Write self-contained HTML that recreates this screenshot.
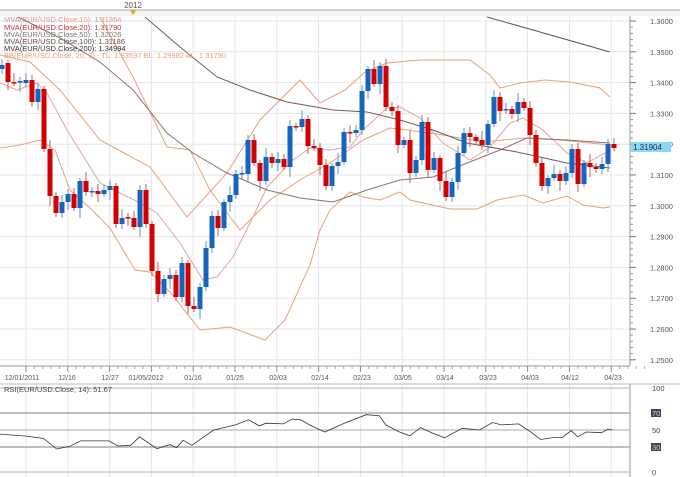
<!DOCTYPE html>
<html><head><meta charset="utf-8"><style>
body{margin:0;width:680px;height:477px;overflow:hidden;background:#fff;font-family:"Liberation Sans",sans-serif}
svg{display:block}
</style></head><body>
<svg id="c" width="680" height="477" xmlns="http://www.w3.org/2000/svg" font-family="Liberation Sans, sans-serif">
<rect width="680" height="477" fill="#fff"/>
<text x="133" y="8" font-size="8" fill="#555" text-anchor="middle">2012</text>
<rect x="0" y="10" width="680" height="6" fill="#f2f2f2"/>
<line x1="0" y1="10" x2="680" y2="10" stroke="#aaa"/>
<polygon points="130,10 136,10 133,15" fill="#f0a030"/>
<g id="grid" stroke="#e6e6ea" stroke-width="1"></g>
<line x1="630" y1="16" x2="630" y2="366" stroke="#999"/>
<line x1="0" y1="366" x2="630" y2="366" stroke="#999"/>
<g id="axis" font-size="7.5" fill="#555"></g>
<g id="lines" fill="none" stroke-width="1"></g>
<g id="candles"></g>
<g font-size="7.5">
<text x="4" y="22" fill="#e49090">MVA(EUR/USD.Close,10): 1.31364</text>
<text x="4" y="30" fill="#c83030">MVA(EUR/USD.Close,20): 1.31790</text>
<text x="4" y="37" fill="#777">MVA(EUR/USD.Close,50): 1.32026</text>
<text x="4" y="44" fill="#6a4a40">MVA(EUR/USD.Close,100): 1.31186</text>
<text x="4" y="51" fill="#333">MVA(EUR/USD.Close,200): 1.34994</text>
<text x="4" y="58" fill="#e8a070">BB(EUR/USD.Close, 20, 2) -  TL: 1.33597  BL: 1.29982  AL: 1.31790</text>
</g>
<rect x="631" y="142" width="40" height="10" fill="#8ed6f2"/>
<text x="633" y="150" font-size="8" fill="#135">1.31904</text>
<line x1="0" y1="384" x2="680" y2="384" stroke="#bbb"/>
<line x1="630" y1="384" x2="630" y2="477" stroke="#999"/>
<line x1="0" y1="388" x2="630" y2="388" stroke="#ccc" stroke-width="1.5"/>
<text x="4" y="392" font-size="7.5" fill="#444">RSI(EUR/USD.Close, 14): 51.67</text>
<line x1="0" y1="413" x2="630" y2="413" stroke="#aaa" stroke-width="1.5"/>
<line x1="0" y1="430" x2="630" y2="430" stroke="#aaa"/>
<line x1="0" y1="447" x2="630" y2="447" stroke="#aaa" stroke-width="1.5"/>
<line x1="0" y1="472" x2="630" y2="472" stroke="#ccc" stroke-width="1.5"/>
<text x="652" y="391" font-size="7.5" fill="#444">100</text>
<rect x="651" y="409" width="10" height="8" fill="#445"/><text x="652" y="416" font-size="7.5" fill="#ccd">70</text>
<text x="652" y="433" font-size="7.5" fill="#444">50</text>
<rect x="651" y="443" width="10" height="8" fill="#445"/><text x="652" y="450" font-size="7.5" fill="#ccd">30</text>
<text x="652" y="475" font-size="7.5" fill="#444">0</text>
<polyline id="rsi" fill="none" stroke="#333" stroke-width="0.8"/>
</svg>
<script>
var NS="http://www.w3.org/2000/svg";
function el(t,a,p){var e=document.createElementNS(NS,t);for(var k in a)e.setAttribute(k,a[k]);if(p)p.appendChild(e);return e;}
var g=document.getElementById('grid'),ax=document.getElementById('axis');
for(var i=0;i<12;i++){var y=21+i*30.8;el('line',{x1:0,y1:y,x2:630,y2:y},g);
var t=el('text',{x:650,y:y+3},ax);t.textContent=(1.36-i*0.01).toFixed(4);el('line',{x1:630,y1:y,x2:636,y2:y,stroke:'#777'},ax);
for(var j=1;j<5&&i<11;j++)el('line',{x1:630,y1:y+j*6.16,x2:633,y2:y+j*6.16,stroke:'#999'},ax);}
for(var x=26;x<630;x+=41.8){el('line',{x1:x,y1:16,x2:x,y2:366},g);el('line',{x1:x,y1:384,x2:x,y2:477},g);
el('line',{x1:x,y1:366,x2:x,y2:372,stroke:'#888'},ax);for(var j=1;j<5;j++)el('line',{x1:x+j*8.36,y1:366,x2:x+j*8.36,y2:369,stroke:'#aaa'},ax);}
var d=[["12/01/2011",22],["12/16",67],["12/27",110],["01/05/2012",146],["01/16",193],["01/25",235],["02/03",278],["02/14",320],["02/23",362],["03/05",403],["03/14",445],["03/23",488],["04/03",530],["04/12",570],["04/23",613]];
d.forEach(function(a){var t=el('text',{x:a[1],y:380,'text-anchor':'middle','font-size':'7'},ax);t.textContent=a[0];});
var C=[[65,69,'b'],[63,82,'r'],[82,83,'r'],[81,82,'b'],[80,83,'b'],[80,102,'r'],[89,102,'b'],[89,149,'r'],[149,196,'r'],[196,213,'r'],[202,213,'b'],[194,202,'b'],[194,208,'r'],[181,208,'b'],[181,192,'r'],[191,192,'b'],[191,194,'r'],[190,194,'b'],[186,190,'b'],[186,224,'r'],[218,224,'b'],[217,218,'r'],[218,227,'r'],[190,227,'b'],[190,224,'r'],[224,271,'r'],[271,294,'r'],[279,294,'b'],[275,279,'b'],[275,297,'r'],[263,297,'b'],[263,306,'r'],[306,309,'r'],[287,309,'b'],[248,287,'b'],[216,248,'b'],[216,228,'r'],[202,228,'b'],[195,202,'b'],[174,195,'b'],[173,174,'b'],[140,174,'b'],[140,163,'r'],[163,181,'r'],[157,181,'b'],[157,163,'r'],[159,163,'b'],[159,167,'r'],[126,167,'b'],[126,127,'r'],[119,127,'b'],[119,146,'r'],[146,148,'r'],[148,165,'r'],[165,186,'r'],[166,186,'b'],[162,166,'b'],[132,162,'b'],[132,133,'r'],[130,133,'b'],[91,130,'b'],[69,91,'b'],[69,84,'r'],[66,84,'b'],[66,107,'r'],[107,111,'r'],[111,145,'r'],[140,145,'b'],[140,173,'r'],[160,173,'b'],[122,160,'b'],[122,170,'r'],[158,170,'b'],[158,181,'r'],[181,197,'r'],[182,197,'b'],[153,182,'b'],[133,153,'b'],[133,137,'r'],[137,141,'r'],[140,145,'r'],[124,145,'b'],[97,124,'b'],[97,111,'r'],[109,110,'b'],[109,114,'r'],[102,114,'b'],[102,108,'r'],[108,135,'r'],[135,163,'r'],[163,186,'r'],[178,186,'b'],[174,178,'b'],[174,181,'r'],[173,181,'b'],[149,173,'b'],[149,184,'r'],[163,184,'b'],[163,167,'r'],[167,169,'r'],[164,169,'b'],[144,164,'b'],[144,148,'r']];
var cg=document.getElementById('candles');
C.forEach(function(c,i){var x=2+6*i;var up=[6,3,9,4,7,5][i%6],dn=[5,8,3,10,4,6][i%5];
var col=c[2]=='r'?'#d40000':'#1565c0',wc=c[2]=='r'?'#c06060':'#6090c0';
el('line',{x1:x,y1:c[0]-up,x2:x,y2:c[1]+dn,stroke:wc,'stroke-width':1},cg);
el('rect',{x:x-2.5,y:c[0],width:5,height:Math.max(1.5,c[1]-c[0]),fill:col},cg);});
var L=[
['#e8a07a',[[0,55],[30,62],[60,90],[100,140],[150,167],[187,217],[227,173],[260,120],[300,80],[320,103],[345,90],[365,72],[387,63],[420,60],[470,60],[490,75],[500,88],[520,83],[545,80],[570,82],[600,88],[610,97]]],
['#e8a07a',[[0,148],[20,145],[40,140],[55,150],[70,190],[90,208],[110,228],[135,270],[150,272],[170,292],[200,330],[230,327],[265,340],[285,320],[310,265],[320,230],[330,210],[350,192],[363,197],[380,200],[400,192],[410,200],[450,209],[477,209],[497,200],[523,195],[543,203],[567,196],[583,205],[603,208],[610,207]]],
['#e8a07a',[[100,17],[133,77],[167,147],[190,150],[210,190],[240,230],[270,200],[300,180],[330,163],[363,140],[390,128],[407,130],[443,135],[483,142],[523,138],[560,140],[610,145]]],
['#e6a0a0',[[0,83],[17,90],[37,83],[47,93],[67,130],[100,183],[140,203],[157,213],[180,243],[203,280],[217,277],[233,257],[253,217],[267,187],[293,160],[310,148],[330,150],[350,147],[363,130],[387,108],[400,107],[420,118],[443,143],[470,160],[490,147],[510,123],[523,118],[543,130],[567,153],[587,163],[610,150]]],
['#907070',[[18,17],[60,38],[100,62],[133,90],[167,133],[193,153],[227,173],[267,190],[300,198],[333,202],[367,190],[400,180],[433,177],[467,163],[500,150],[527,138],[567,140],[610,143]]],
['#7a5a50',[[145,17],[180,47],[217,77],[250,90],[287,102],[333,110],[367,112],[400,120],[433,130],[467,143],[517,152],[567,163],[610,168]]],
['#6a5050',[[487,17],[533,30],[610,52]]]];
var lg=document.getElementById('lines');
L.forEach(function(l){el('polyline',{points:l[1].map(function(p){return p.join(',')}).join(' '),stroke:l[0]},lg);});
var R=[[0,252],[60,258],[100,265],[130,296],[160,288],[185,272],[250,272],[270,287],[300,285],[320,260],[360,295],[390,283],[405,292],[420,270],[440,285],[490,240],[540,225],[570,210],[595,228],[610,220],[650,222],[670,208],[690,210],[710,225],[745,246],[790,220],[840,195],[870,198],[885,225],[915,245],[940,257],[965,233],[990,248],[1020,263],[1060,235],[1100,240],[1130,218],[1150,225],[1190,222],[1220,248],[1240,268],[1270,262],[1290,262],[1310,242],[1325,260],[1345,246],[1380,248],[1395,237],[1405,240]];
document.getElementById('rsi').setAttribute('points',R.map(function(p){return (p[0]/2.294).toFixed(1)+','+(348.4+p[1]*0.34).toFixed(1)}).join(' '));
</script>
</body></html>
